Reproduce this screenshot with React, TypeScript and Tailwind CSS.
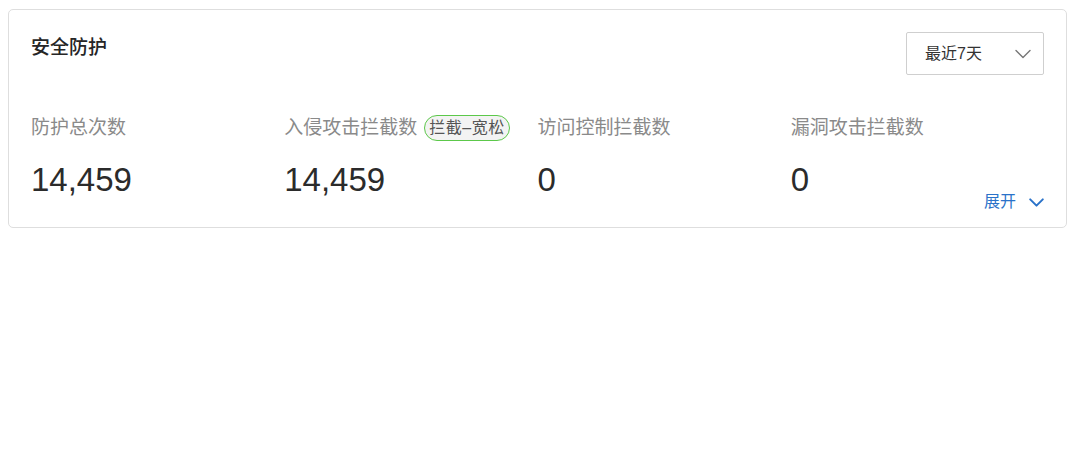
import React from 'react';

const font = { fontFamily: '"Liberation Sans", "Noto Sans CJK SC", sans-serif' };

const stats = [
  { label: '防护总次数', value: '14,459' },
  { label: '入侵攻击拦截数', value: '14,459', badge: '拦截–宽松' },
  { label: '访问控制拦截数', value: '0' },
  { label: '漏洞攻击拦截数', value: '0' },
];

function Chevron({ className, width = 2 }: { className?: string; width?: number }) {
  return (
    <svg viewBox="0 0 16 10" className={className} fill="none">
      <path d="M1 1.5 L8 8.5 L15 1.5" stroke="currentColor" strokeWidth={width} strokeLinecap="round" strokeLinejoin="round" />
    </svg>
  );
}

export default function App() {
  return (
    <div className="w-[1080px] h-[476px] bg-white" style={font}>
      <div className="ml-2 mt-[9px] w-[1059px] rounded-[5px] border border-[#dedede] bg-white px-[22px] pt-[22px] pb-[15px]">
        {/* header */}
        <div className="flex items-start justify-between">
          <div className="mt-[4px] text-[19px] leading-[24px] font-medium text-[#262626]">安全防护</div>
          <div className="flex h-[43px] w-[138px] items-center justify-between rounded-[2px] border border-[#cfcfcf] pl-[18px] pr-[12px]">
            <span className="text-[16px] text-[#333]">最近7天</span>
            <Chevron className="h-[10px] w-[16px] text-[#777]" width={1.4} />
          </div>
        </div>

        {/* stats */}
        <div className="mt-[39px] grid grid-cols-4">
          {stats.map((s) => (
            <div key={s.label} className="flex flex-col">
              <div className="flex h-[28px] items-center">
                <span className="text-[19px] leading-[28px] text-[#8a8a8a]">{s.label}</span>
                {s.badge && (
                  <span className="ml-[7px] flex h-[26px] items-center rounded-full border-[1.5px] border-[#5cc84a] bg-[#f3f3f3] px-[4px] text-[16px] leading-none tracking-[0.5px] text-[#555]">
                    {s.badge}
                  </span>
                )}
              </div>
              <div className="mt-[18px] text-[33px] leading-[40px] text-[#2b2b2b]">{s.value}</div>
            </div>
          ))}
        </div>

        <div className="mt-[-8px] flex justify-end">
          <button className="flex items-center gap-[13px] text-[16px] leading-[20px] text-[#2a72c9]">
            展开
            <Chevron className="h-[9px] w-[15px] text-[#2a72c9]" width={2.2} />
          </button>
        </div>
      </div>
    </div>
  );
}
